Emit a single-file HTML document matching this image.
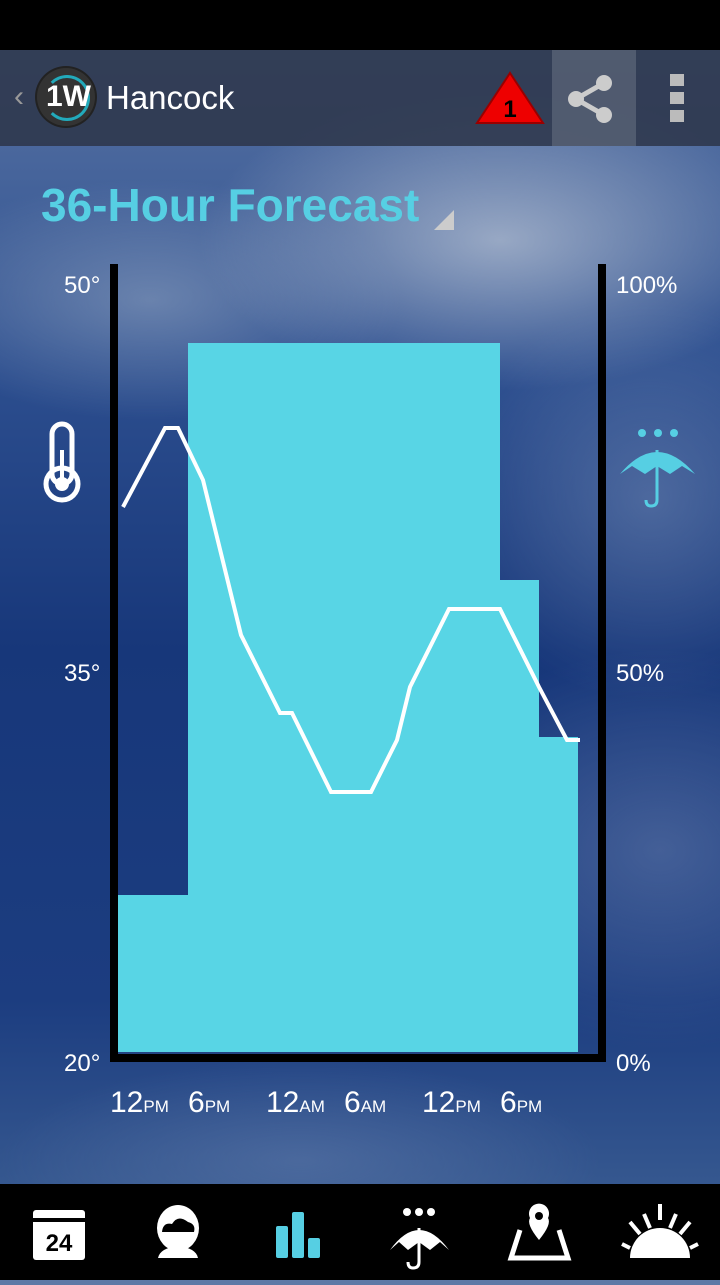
<!DOCTYPE html>
<html><head><style>
body{margin:0;width:720px;height:1280px;overflow:hidden;position:relative;font-family:"Liberation Sans",sans-serif;
background:
radial-gradient(ellipse 300px 150px at 500px 240px,rgba(190,200,215,.7),transparent),
radial-gradient(ellipse 250px 120px at 150px 300px,rgba(170,185,205,.45),transparent),
radial-gradient(ellipse 200px 200px at 650px 500px,rgba(140,160,195,.4),transparent),
radial-gradient(ellipse 250px 200px at 660px 850px,rgba(130,150,190,.4),transparent),
radial-gradient(ellipse 300px 100px at 300px 1160px,rgba(110,135,180,.4),transparent),
linear-gradient(#5e78a6 0,#2e5090 350px,#17377a 650px,#1c3d80 1000px,#35578f 1180px);}
.top{position:absolute;top:0;left:0;width:720px;height:50px;background:#000}
.bar{position:absolute;top:50px;left:0;width:720px;height:96px;background:rgba(45,55,75,.88)}
.nav{position:absolute;top:1184px;left:0;width:720px;height:96px;background:#000}
.t{position:absolute;color:#fff;font-size:24px}
</style></head><body>
<div class="top"></div>
<div class="bar">
<div style="position:absolute;left:552px;top:0;width:84px;height:96px;background:rgba(110,120,135,.5)"></div>
<div style="position:absolute;left:14px;top:30px;color:#999;font-size:30px">‹</div>
<div style="position:absolute;left:37px;top:18px;width:58px;height:58px;border-radius:50%;background:#333;box-shadow:0 0 0 2px #222"></div>
<div style="position:absolute;left:44px;top:25px;width:40px;height:40px;border-radius:50%;border:3px solid #2ab;border-left-color:transparent"></div>
<div style="position:absolute;left:46px;top:30px;color:#fff;font-weight:bold;font-size:30px">1W</div>
<div style="position:absolute;left:106px;top:29px;color:#fff;font-size:33px">Hancock</div>
<svg style="position:absolute;left:474px;top:20px" width="72" height="56"><polygon points="36,3 69,53 3,53" fill="#e00" stroke="#900" stroke-width="2"/><text x="36" y="47" font-size="24" font-weight="bold" text-anchor="middle" font-family="Liberation Sans">1</text></svg>
<svg style="position:absolute;left:566px;top:24px" width="50" height="50"><g stroke="#ccc" stroke-width="5"><line x1="10" y1="25" x2="38" y2="9"/><line x1="10" y1="25" x2="38" y2="41"/></g><g fill="#ccc"><circle cx="10" cy="25" r="8"/><circle cx="38" cy="9" r="8"/><circle cx="38" cy="41" r="8"/></g></svg>
<div style="position:absolute;left:670px;top:24px;width:14px;height:48px;background:linear-gradient(#bbb 0 12px,transparent 12px 18px,#bbb 18px 30px,transparent 30px 36px,#bbb 36px)"></div>
</div>
<div style="position:absolute;left:41px;top:178px;color:#56cfe3;font-size:46px;font-weight:bold">36-Hour Forecast</div>
<svg style="position:absolute;left:434px;top:210px" width="22" height="20"><polygon points="20,0 20,20 0,20" fill="#ccc"/></svg>
<div class="t" style="left:64px;top:272px">50°</div>
<div class="t" style="left:64px;top:660px">35°</div>
<div class="t" style="left:64px;top:1050px">20°</div>
<div class="t" style="left:616px;top:272px">100%</div>
<div class="t" style="left:616px;top:660px">50%</div>
<div class="t" style="left:616px;top:1050px">0%</div>
<svg style="position:absolute;left:0;top:0" width="720" height="1180">
<rect x="110" y="264" width="8" height="798" fill="#000"/>
<rect x="110" y="1054" width="496" height="8" fill="#000"/>
<rect x="598" y="264" width="8" height="798" fill="#000"/>
<g fill="#58d5e5"><rect x="118" y="895" width="70" height="157"/><rect x="188" y="343" width="312" height="709"/><rect x="500" y="580" width="39" height="472"/><rect x="539" y="737" width="39" height="315"/></g>
<polyline fill="none" stroke="#fff" stroke-width="4" points="123,507 165,428 178,428 203,480 241,635 280,713 292,713 331,792 371,792 397,740 410,687 449,609 500,609 539,687 567,740 580,740"/>
<g fill="none" stroke="#fff" stroke-width="5"><rect x="52" y="424" width="20" height="60" rx="10"/><circle cx="62" cy="484" r="16"/></g>
<circle cx="62" cy="484" r="7" fill="#fff"/><line x1="62" y1="450" x2="62" y2="484" stroke="#fff" stroke-width="4"/>
<g fill="#56cfe3"><circle cx="642" cy="433" r="4"/><circle cx="658" cy="433" r="4"/><circle cx="674" cy="433" r="4"/><path d="M620 474 Q657 430 695 474 L682 466 L670 474 L657 466 L645 474 L632 466Z"/></g>
<path d="M657 450 V500 Q657 506 651 506 Q646 506 646 500" fill="none" stroke="#56cfe3" stroke-width="3"/>
<g fill="#fff" font-family="Liberation Sans" font-size="30"><text x="110" y="1112">12<tspan font-size="17">PM</tspan></text><text x="188" y="1112">6<tspan font-size="17">PM</tspan></text><text x="266" y="1112">12<tspan font-size="17">AM</tspan></text><text x="344" y="1112">6<tspan font-size="17">AM</tspan></text><text x="422" y="1112">12<tspan font-size="17">PM</tspan></text><text x="500" y="1112">6<tspan font-size="17">PM</tspan></text></g>
</svg>
<div class="nav">
<svg width="720" height="96">
<rect x="33" y="26" width="52" height="50" rx="3" fill="#fff"/><rect x="33" y="34" width="52" height="4" fill="#000"/>
<text x="59" y="67" font-size="24" font-weight="bold" text-anchor="middle" font-family="Liberation Sans">24</text>
<ellipse cx="178" cy="44" rx="21" ry="23" fill="#fff"/><path d="M162 48 Q163 38 172 40 Q178 30 188 38 Q196 40 194 48Z" fill="#000"/><path d="M158 74 Q160 64 178 62 Q196 64 198 74Z" fill="#fff"/>
<g fill="#56cfe3"><rect x="276" y="42" width="12" height="32" rx="2"/><rect x="292" y="28" width="12" height="46" rx="2"/><rect x="308" y="54" width="12" height="20" rx="2"/></g>
<g fill="#fff"><circle cx="407" cy="28" r="4"/><circle cx="419" cy="28" r="4"/><circle cx="431" cy="28" r="4"/><path d="M390 66 Q419 26 449 66 L440 58 L430 66 L419 58 L408 66 L399 58Z"/></g>
<path d="M419 44 V78 Q419 84 413 84 Q408 84 408 78" fill="none" stroke="#fff" stroke-width="3"/>
<path d="M520 46 L511 74 H568 L559 46" fill="none" stroke="#fff" stroke-width="5"/><path d="M539 56 Q526 40 530 34 A10 10 0 1 1 548 34 Q552 40 539 56Z" fill="#fff"/><circle cx="539" cy="32" r="4" fill="#000"/>
<path d="M630 74 A30 30 0 0 1 690 74Z" fill="#fff"/><g stroke="#fff" stroke-width="4"><line x1="660" y1="20" x2="660" y2="36"/><line x1="630" y1="38" x2="640" y2="50"/><line x1="690" y1="38" x2="680" y2="50"/><line x1="622" y1="60" x2="630" y2="64"/><line x1="698" y1="60" x2="690" y2="64"/><line x1="644" y1="30" x2="650" y2="44"/><line x1="676" y1="30" x2="670" y2="44"/></g>
</svg>
</div>
</body></html>
